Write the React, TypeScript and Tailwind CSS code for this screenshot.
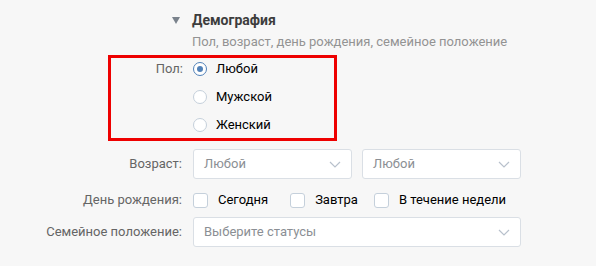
import { useState } from "react";

const font = { fontFamily: "Roboto, 'Noto Sans', Arial, sans-serif" };

function Chevron() {
    return (
        <svg width="12" height="7" viewBox="0 0 12 7" className="shrink-0">
            <path d="M1 1l5 5 5-5" fill="none" stroke="#b8c1cc" strokeWidth="1.2" />
        </svg>
    );
}

function Select({ value, className = "" }: { value: string; className?: string }) {
    return (
        <div className={`flex h-[30px] items-center justify-between rounded-[3px] border border-[#dadfe5] bg-white pl-[10px] pr-[10px] text-[13px] text-[#8b8f94] ${className}`}>
            <span>{value}</span>
            <Chevron />
        </div>
    );
}

function Radio({ checked, label, onClick }: { checked: boolean; label: string; onClick: () => void }) {
    return (
        <div className="flex h-[22px] cursor-pointer items-center" onClick={onClick}>
            <span className={`flex h-[14px] w-[14px] items-center justify-center rounded-full border bg-white ${checked ? "border-[#5181b8]" : "border-[#c5d0db]"}`}>
                {checked && <span className="h-[6px] w-[6px] rounded-full bg-[#5181b8]" />}
            </span>
            <span className="ml-[9px] text-[13px] text-[#000]">{label}</span>
        </div>
    );
}

function Checkbox({ label, className = "" }: { label: string; className?: string }) {
    const [on, setOn] = useState(false);
    return (
        <div className={`flex cursor-pointer items-center ${className}`} onClick={() => setOn(!on)}>
            <span className={`h-[15px] w-[15px] rounded-[3px] border border-[#c5d0db] ${on ? "bg-[#5181b8]" : "bg-white"}`} />
            <span className="ml-[10px] text-[13px] text-[#000]">{label}</span>
        </div>
    );
}

function Label({ text }: { text: string }) {
    return <div className="w-[182px] shrink-0 text-right text-[13px] text-[#656565]">{text}</div>;
}

export default function App() {
    const [sex, setSex] = useState(0);
    const options = ["Любой", "Мужской", "Женский"];

    return (
        <div className="h-[266px] w-[596px] overflow-hidden bg-[#f7f7f7]" style={font}>
            {/* section header */}
            <div className="flex items-center pl-[172px] pt-[11px]">
                <svg width="8" height="7" viewBox="0 0 8 7" className="shrink-0">
                    <path d="M0 0h8L4 7z" fill="#7a828c" />
                </svg>
                <span className="ml-[12px] text-[14px] font-bold leading-[18px] text-[#3d3d3d]">Демография</span>
            </div>
            <div className="mt-[4px] pl-[192px] text-[13px] leading-[18px] text-[#939393]">
                Пол, возраст, день рождения, семейное положение
            </div>

            {/* sex, highlighted */}
            <div className="ml-[108px] mt-[4px] flex w-[229px] border-[3px] border-[#ee0000] pb-[2px]">
                <div className="w-[72px] shrink-0 pt-[2px] text-right text-[13px] leading-[18px] text-[#656565]">Пол:</div>
                <div className="ml-[10px] flex flex-col gap-[6px]">
                    {options.map((o, i) => (
                        <Radio key={o} label={o} checked={sex === i} onClick={() => setSex(i)} />
                    ))}
                </div>
            </div>

            {/* age */}
            <div className="mt-[8px] flex items-center">
                <Label text="Возраст:" />
                <div className="ml-[11px] flex w-[328px] gap-[10px]">
                    <Select value="Любой" className="flex-1" />
                    <Select value="Любой" className="flex-1" />
                </div>
            </div>

            {/* birthday */}
            <div className="mt-[7px] flex h-[28px] items-center">
                <Label text="День рождения:" />
                <div className="ml-[11px] flex items-center">
                    <Checkbox label="Сегодня" />
                    <Checkbox label="Завтра" className="ml-[22px]" />
                    <Checkbox label="В течение недели" className="ml-[16px]" />
                </div>
            </div>

            {/* marital status */}
            <div className="mt-[3px] flex items-center">
                <Label text="Семейное положение:" />
                <Select value="Выберите статусы" className="ml-[11px] w-[328px]" />
            </div>
        </div>
    );
}
